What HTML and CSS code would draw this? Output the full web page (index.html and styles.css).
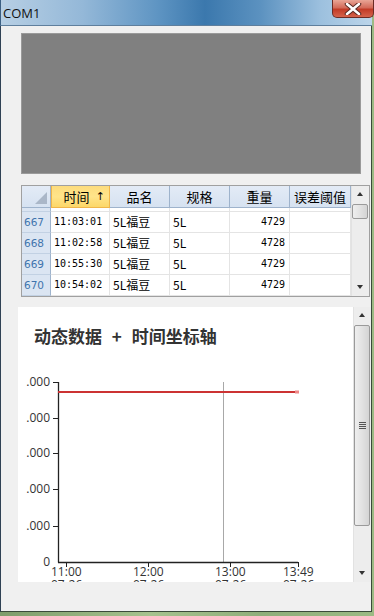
FILE: index.html
```html
<!DOCTYPE html>
<html lang="zh-CN">
<head>
    <meta charset="UTF-8">
    <title>COM1</title>
    <link rel="stylesheet" href="styles.css">
</head>
<body>
    <div class="window">
        <div class="titlebar">
            <span class="title">COM1</span>
            <div class="close">
                <svg width="18" height="12" viewBox="0 0 18 12">
                    <path d="M3 1 L15 11 M15 1 L3 11" stroke="#5a2a24" stroke-width="4.5" stroke-linecap="round"/>
                    <path d="M3 1 L15 11 M15 1 L3 11" stroke="#fff" stroke-width="2.5" stroke-linecap="round"/>
                </svg>
            </div>
        </div>

        <div class="client">
            <div class="preview"></div>

            <div class="grid">
                <div class="grid-body">
                    <div class="row head">
                        <div class="corner"><span class="tri"></span></div>
                        <div class="hcell sorted">时间<span class="sort">↑</span></div>
                        <div class="hcell">品名</div>
                        <div class="hcell">规格</div>
                        <div class="hcell">重量</div>
                        <div class="hcell">误差阈值</div>
                    </div>
                    <div class="row stub">
                        <div class="rh"></div><div></div><div></div><div></div><div></div><div></div>
                    </div>
                    <div class="row">
                        <div class="rh">667</div><div class="num">11:03:01</div><div>5L福豆</div><div>5L</div><div class="right num">4729</div><div></div>
                    </div>
                    <div class="row">
                        <div class="rh">668</div><div class="num">11:02:58</div><div>5L福豆</div><div>5L</div><div class="right num">4728</div><div></div>
                    </div>
                    <div class="row">
                        <div class="rh">669</div><div class="num">10:55:30</div><div>5L福豆</div><div>5L</div><div class="right num">4729</div><div></div>
                    </div>
                    <div class="row">
                        <div class="rh">670</div><div class="num">10:54:02</div><div>5L福豆</div><div>5L</div><div class="right num">4729</div><div></div>
                    </div>
                </div>
                <div class="vscroll small">
                    <div class="arrow up"></div>
                    <div class="track"><div class="thumb"></div></div>
                    <div class="arrow down"></div>
                </div>
            </div>

            <div class="chart-wrap">
                <div class="chart">
                    <div class="chart-title">动态数据 + 时间坐标轴</div>
                    <svg class="plot" width="337" height="236" viewBox="0 0 337 236">
                        <g class="ylabels">
                            <text x="32" y="40">.000</text>
                            <text x="32" y="76">.000</text>
                            <text x="32" y="111">.000</text>
                            <text x="32" y="147">.000</text>
                            <text x="32" y="184">.000</text>
                            <text x="32" y="220">0</text>
                        </g>
                        <g stroke="#222" stroke-width="1">
                            <line x1="35" y1="36.5" x2="40" y2="36.5"/>
                            <line x1="35" y1="72.5" x2="40" y2="72.5"/>
                            <line x1="35" y1="107.5" x2="40" y2="107.5"/>
                            <line x1="35" y1="143.5" x2="40" y2="143.5"/>
                            <line x1="35" y1="180.5" x2="40" y2="180.5"/>
                            <line x1="48.5" y1="216" x2="48.5" y2="221"/>
                            <line x1="130.5" y1="216" x2="130.5" y2="221"/>
                            <line x1="212.5" y1="216" x2="212.5" y2="221"/>
                            <line x1="280.5" y1="216" x2="280.5" y2="221"/>
                        </g>
                        <line x1="205.5" y1="36" x2="205.5" y2="216" stroke="#a8a8a8" stroke-width="1"/>
                        <line x1="40.5" y1="36" x2="40.5" y2="216.5" stroke="#222" stroke-width="1.3"/>
                        <line x1="40" y1="216.5" x2="280" y2="216.5" stroke="#222" stroke-width="1.3"/>
                        <line x1="40" y1="46" x2="280" y2="46" stroke="#cc3333" stroke-width="2"/>
                        <rect x="277" y="44.5" width="4" height="3" fill="#e88"/>
                        <g class="xlabels">
                            <text x="33" y="230">11:00</text>
                            <text x="115" y="230">12:00</text>
                            <text x="197" y="230">13:00</text>
                            <text x="265" y="230">13:49</text>
                            <text x="33" y="243">07-26</text>
                            <text x="115" y="243">07-26</text>
                            <text x="197" y="243">07-26</text>
                            <text x="265" y="243">07-26</text>
                        </g>
                    </svg>
                </div>
                <div class="vscroll big">
                    <div class="arrow up"></div>
                    <div class="track"><div class="thumb"><span class="grip"></span></div></div>
                    <div class="arrow down"></div>
                </div>
            </div>
        </div>
    </div>
</body>
</html>
```

FILE: styles.css
```css
* {
    margin: 0;
    padding: 0;
    box-sizing: border-box;
}

body {
    width: 374px;
    height: 616px;
    overflow: hidden;
    background: linear-gradient(90deg, #7e9c6a, #a6c28e 40%, #8fae7a 70%, #9cba84);
    font-family: "Open Sans", "Noto Sans CJK SC", sans-serif;
}

.window {
    width: 372px;
    height: 612px;
    display: flex;
    flex-direction: column;
}

.titlebar {
    height: 26px;
    position: relative;
    background: linear-gradient(90deg, #b7cfe4 0%, #94b8d8 22%, #5f95c3 42%, #3b78ad 55%, #5c92c0 70%, #9cc0de 86%, #bcd5ea 100%);
    border-left: 1px solid #3b5f82;
    border-bottom: 1px solid #5f7f9d;
}

.title {
    position: absolute;
    left: 2px;
    top: 4px;
    font-family: "Open Sans", sans-serif;
    font-size: 13px;
    color: #111;
}

.close {
    position: absolute;
    right: -2px;
    top: 0;
    width: 42px;
    height: 18px;
    border: 1px solid #6b2b25;
    border-top: none;
    border-radius: 0 0 5px 5px;
    background: linear-gradient(#e9a596, #d36b5a 45%, #c23b27 55%, #d5634c);
    display: flex;
    justify-content: center;
    align-items: center;
}

.client {
    flex: 1;
    background: #f0f0f0;
    border-left: 1px solid #2f4154;
    border-right: 1px solid #3a4a3a;
    border-bottom: 1px solid #3a4a3a;
    display: flex;
    flex-direction: column;
}

.preview {
    margin: 7px 0 0 20px;
    width: 340px;
    height: 141px;
    background: #808080;
    border: 1px solid #9a9a9a;
}

/* data grid */
.grid {
    margin: 11px 0 0 20px;
    width: 349px;
    height: 112px;
    border: 1px solid #a0a0a0;
    background: #fff;
    display: flex;
}

.grid-body {
    width: 329px;
    font-family: "Noto Sans CJK SC", sans-serif;
    font-size: 12px;
    color: #000;
}

.row {
    display: grid;
    grid-template-columns: 29px 59px 60px 60px 60px 61px;
    height: 21px;
}

.row > div {
    border-right: 1px solid #e4e4e4;
    border-bottom: 1px solid #e4e4e4;
    padding-left: 3px;
    line-height: 20px;
    white-space: nowrap;
    overflow: hidden;
}

.row.head {
    height: 22px;
}

.row.head > div {
    background: linear-gradient(#e3ebf6, #d6e2f1);
    border-right: 1px solid #9eb3cc;
    border-bottom: 1px solid #9eb3cc;
    text-align: center;
    padding: 0;
    font-size: 13px;
    line-height: 21px;
}

.row.head > .sorted {
    background: linear-gradient(#fddc7d, #ffe48a 50%, #fcd768);
    border: 1px solid #f0b64a;
    border-top: none;
    position: relative;
    padding-right: 8px;
}

.sort {
    position: absolute;
    right: 4px;
    top: 0;
    font-size: 11px;
    font-family: "DejaVu Sans", sans-serif;
}

.corner {
    position: relative;
}

.tri {
    position: absolute;
    right: 3px;
    bottom: 3px;
    width: 0;
    height: 0;
    border-left: 12px solid transparent;
    border-bottom: 12px solid #aab7c8;
}

.row.stub {
    height: 4px;
}

.row .rh {
    background: #dbe5f2;
    border-right: 1px solid #9eb3cc;
    border-bottom: 1px solid #c2d1e3;
    color: #3f74ad;
    font-family: "DejaVu Sans", sans-serif;
    font-size: 10.5px;
    padding-left: 2px;
}

.num {
    font-family: "DejaVu Sans Mono", monospace;
    font-size: 10px;
}

.row .right {
    text-align: right;
    padding-right: 4px;
}

/* scrollbars */
.vscroll {
    display: flex;
    flex-direction: column;
    background: #ededed;
    border-left: 1px solid #e2e2e2;
}

.vscroll.small {
    width: 18px;
}

.vscroll.big {
    width: 18px;
    height: 275px;
}

.arrow {
    height: 17px;
    position: relative;
}

.arrow::after {
    content: "";
    position: absolute;
    left: 5px;
    top: 6px;
    border-left: 3.5px solid transparent;
    border-right: 3.5px solid transparent;
}

.arrow.up::after {
    border-bottom: 4px solid #333;
}

.arrow.down::after {
    border-top: 4px solid #333;
}

.track {
    flex: 1;
    position: relative;
}

.thumb {
    margin: 1px 1px 0 0;
    border: 1px solid #9a9a9a;
    border-radius: 2px;
    background: linear-gradient(90deg, #eeeeee, #e2e2e2 50%, #d4d4d4);
}

.small .thumb {
    height: 15px;
}

.big .thumb {
    height: 201px;
    display: flex;
    justify-content: center;
    align-items: center;
}

.grip {
    width: 7px;
    height: 7px;
    background: repeating-linear-gradient(#555 0 1px, transparent 1px 2px);
}

/* chart */
.chart-wrap {
    margin: 10px 0 0 17px;
    display: flex;
}

.chart {
    width: 338px;
    height: 275px;
    background: #fff;
    overflow: hidden;
}

.chart-title {
    padding: 20px 0 0 16px;
    height: 39px;
    font-family: "Noto Sans CJK SC", sans-serif;
    font-weight: bold;
    font-size: 17px;
    line-height: 18px;
    word-spacing: 6px;
    color: #333;
}

.plot {
    display: block;
}

.plot text {
    font-family: "Open Sans", sans-serif;
    font-size: 12px;
    fill: #333;
}

.ylabels text {
    text-anchor: end;
}
```
